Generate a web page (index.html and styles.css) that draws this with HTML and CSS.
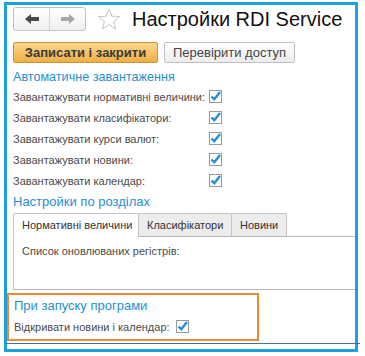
FILE: index.html
```html
<!DOCTYPE html>
<html>
<head>
<meta charset="utf-8">
<link rel="stylesheet" href="styles.css">
</head>
<body>
<div class="frame">
  <div class="header">
    <div class="nav">
      <div class="nav-btn">
        <svg width="14" height="10" viewBox="0 0 14 10"><path d="M0 5 L6 0 L6 3 L14 3 L14 7 L6 7 L6 10 Z" fill="#4a4a4a"/></svg>
      </div>
      <div class="nav-btn">
        <svg width="14" height="10" viewBox="0 0 14 10"><path d="M14 5 L8 0 L8 3 L0 3 L0 7 L8 7 L8 10 Z" fill="#a8a8a8"/></svg>
      </div>
    </div>
    <svg class="star" width="24" height="22" viewBox="0 0 24 22"><path d="M12 1 L14.9 8.2 L22.6 8.6 L16.6 13.5 L18.6 21 L12 16.8 L5.4 21 L7.4 13.5 L1.4 8.6 L9.1 8.2 Z" fill="none" stroke="#c4c4c4" stroke-width="1"/></svg>
    <h1 class="title">Настройки RDI Service</h1>
  </div>
  <div class="actions">
    <button class="btn btn-primary">Записати і закрити</button>
    <button class="btn">Перевірити доступ</button>
  </div>
  <div class="section-title first">Автоматичне завантаження</div>
  <div class="rows">
    <div class="row"><span class="label">Завантажувати нормативні величини:</span><span class="cb"><svg width="13" height="13" viewBox="0 0 13 13"><path d="M2.5 6.5 L5.3 9.3 L11 2" fill="none" stroke="#1f8fd6" stroke-width="2.4"/></svg></span></div>
    <div class="row"><span class="label">Завантажувати класифікатори:</span><span class="cb"><svg width="13" height="13" viewBox="0 0 13 13"><path d="M2.5 6.5 L5.3 9.3 L11 2" fill="none" stroke="#1f8fd6" stroke-width="2.4"/></svg></span></div>
    <div class="row"><span class="label">Завантажувати курси валют:</span><span class="cb"><svg width="13" height="13" viewBox="0 0 13 13"><path d="M2.5 6.5 L5.3 9.3 L11 2" fill="none" stroke="#1f8fd6" stroke-width="2.4"/></svg></span></div>
    <div class="row"><span class="label">Завантажувати новини:</span><span class="cb"><svg width="13" height="13" viewBox="0 0 13 13"><path d="M2.5 6.5 L5.3 9.3 L11 2" fill="none" stroke="#1f8fd6" stroke-width="2.4"/></svg></span></div>
    <div class="row"><span class="label">Завантажувати календар:</span><span class="cb"><svg width="13" height="13" viewBox="0 0 13 13"><path d="M2.5 6.5 L5.3 9.3 L11 2" fill="none" stroke="#1f8fd6" stroke-width="2.4"/></svg></span></div>
  </div>
  <div class="section-title second">Настройки по розділах</div>
  <div class="tabs">
    <div class="tab active">Нормативні величини</div>
    <div class="tab">Класифікатори</div>
    <div class="tab">Новини</div>
    <div class="tab-fill"></div>
  </div>
  <div class="panel">
    <div class="panel-text">Список оновлюваних регістрів:</div>
  </div>
  <div class="highlight">
    <div class="section-title third">При запуску програми</div>
    <div class="row short"><span class="label">Відкривати новини і календар:</span><span class="cb"><svg width="13" height="13" viewBox="0 0 13 13"><path d="M2.5 6.5 L5.3 9.3 L11 2" fill="none" stroke="#1f8fd6" stroke-width="2.4"/></svg></span></div>
  </div>
  <div class="window-line"></div>
</div>
</body>
</html>
```
FILE: styles.css
```css
* { box-sizing: border-box; }
body {
  margin: 0;
  background: #fff;
  font-family: "Liberation Sans", Arial, sans-serif;
  color: #4a4a4a;
}
.frame {
  position: relative;
  margin: 2px 0 0 4px;
  width: 354px;
  height: 350px;
  border: 3px solid #1c9fdd;
  padding: 2px 0 0 0;
}
.header {
  display: flex;
  align-items: center;
  height: 24px;
  padding-left: 6px;
}
.nav {
  display: flex;
  width: 73px;
  height: 24px;
  border: 1px solid #c2c2c2;
  border-radius: 3px;
  background: linear-gradient(#ffffff, #efefef);
}
.nav-btn {
  flex: 1;
  display: flex;
  align-items: center;
  justify-content: center;
}
.nav-btn + .nav-btn { border-left: 1px solid #d4d4d4; }
.star { margin-left: 11px; }
.title {
  margin: 0 0 0 11px;
  font-size: 20px;
  font-weight: normal;
  color: #111;
  line-height: 24px;
}
.actions {
  display: flex;
  gap: 6px;
  margin-top: 11px;
  padding-left: 6px;
}
.btn {
  height: 21px;
  padding: 0 4px;
  font-family: "Liberation Sans", Arial, sans-serif;
  font-size: 13px;
  color: #444;
  border: 1px solid #c0c0c0;
  border-radius: 2px;
  background: linear-gradient(#ffffff, #ececec);
  white-space: nowrap;
}
.btn-primary {
  width: 145px;
  font-weight: bold;
  color: #3a3a3a;
  border-color: #c79438;
  background: linear-gradient(#fbd88f, #efae45);
}
.btn:not(.btn-primary) { width: 131px; }
.section-title {
  color: #1f8fd3;
  padding-left: 6px;
  white-space: nowrap;
  font-size: 13px;
}
.section-title.first { font-size: 12.6px; margin-top: 5px; height: 18px; line-height: 18px; }
.section-title.second { height: 22px; line-height: 22px; }
.rows { padding-left: 6px; }
.row {
  display: flex;
  align-items: center;
  height: 21px;
  font-size: 11px;
}
.label { width: 196px; white-space: nowrap; }
.cb {
  width: 13px;
  height: 13px;
  border: 1px solid #9a9a9a;
  background: #fff;
  display: flex;
  align-items: center;
  justify-content: center;
}
.cb svg { flex: none; }
.tabs {
  display: flex;
  height: 24px;
  margin-left: 6px;
  align-items: flex-end;
}
.tab {
  height: 24px;
  padding: 0 0 0 8px;
  font-size: 11px;
  line-height: 23px;
  color: #333;
  white-space: nowrap;
  border: 1px solid #c4c4c4;
  border-bottom: 1px solid #b8b8b8;
  background: #ececec;
  border-radius: 2px 2px 0 0;
  margin-right: -1px;
}
.tab.active {
  background: #fff;
  border-bottom-color: #fff;
  width: 126px;
}
.tab:nth-child(2) { width: 94px; }
.tab:nth-child(3) { width: 56px; }
.tab-fill {
  flex: 1;
  border-bottom: 1px solid #b8b8b8;
}
.panel {
  margin-left: 6px;
  height: 53px;
  border-left: 1px solid #c4c4c4;
  border-bottom: 1px solid #b8b8b8;
}
.panel-text {
  font-size: 11px;
  padding: 6px 0 0 8px;
  line-height: 16px;
}
.highlight {
  margin-top: 3px;
  width: 252px;
  height: 48px;
  border: 2px solid #ee8a34;
  padding-left: 5px;
}
.section-title.third { padding-left: 0; height: 20px; line-height: 20px; margin-top: 1px; }
.row.short .label { width: auto; margin-right: 6px; }
.window-line {
  position: absolute;
  left: -2px;
  right: -5px;
  top: 338px;
  height: 1px;
  background: #4670a0;
}
```
